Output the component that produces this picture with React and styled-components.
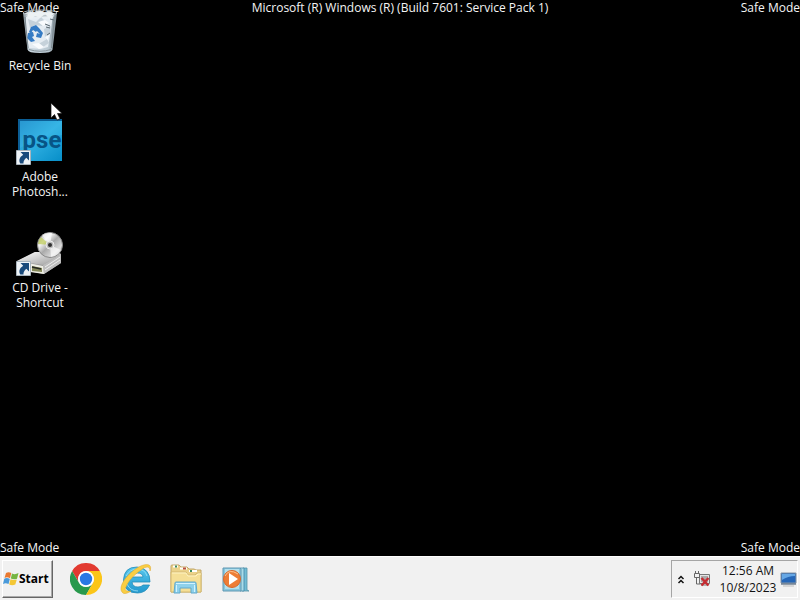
import React from "react";
import styled, { createGlobalStyle } from "styled-components";

const GlobalStyle = createGlobalStyle`
  * { box-sizing: border-box; }
  body { margin: 0; background: #000; }
  button { font: inherit; border: 0; padding: 0; background: none; color: inherit; }
`;

const Screen = styled.div`
  display: flex;
  flex-direction: column;
  min-height: 100vh;
  overflow: hidden;
  background: #000;
  color: #f4f4f4;
  font: 12px/15px "Open Sans", "Noto Sans", sans-serif;
`;

const Desktop = styled.main`
  position: relative;
  flex: 1;
  padding-top: 8px;
`;

const Watermark = styled.div`
  position: absolute;
  left: 0;
  right: 0;
  ${(p) => (p.$bottom ? "bottom: 0;" : "top: 0;")}
  display: grid;
  grid-template-columns: 1fr auto 1fr;
  line-height: 16px;
  white-space: nowrap;
  pointer-events: none;

  span:last-child { text-align: right; }
`;

const Shortcuts = styled.nav`
  position: relative;
  display: flex;
  flex-direction: column;
  width: 80px;
`;

const Shortcut = styled.button`
  display: flex;
  flex-direction: column;
  align-items: center;
  justify-content: flex-start;
  gap: 2px;
  height: 111px;
  text-align: center;

  svg { display: block; flex: none; }
  span { max-width: 72px; }
`;

const Pointer = styled.svg`
  position: absolute;
  left: 50px;
  top: 102px;
`;

const Taskbar = styled.footer`
  display: flex;
  align-items: stretch;
  height: 44px;
  background: #f1f1f1;
  border-top: 1px solid #fff;
  color: #111;
`;

const StartButton = styled.button`
  display: flex;
  align-items: center;
  width: 51px;
  margin: 3px 0 2px 2px;
  padding-bottom: 1px;
  background: #f1f1f1;
  border: 1px solid;
  border-color: #fff #666 #666 #fff;
  box-shadow: inset -1px -1px #aaa;
  color: #000;
  font-size: 12px;
  font-weight: 700;

  svg { flex: none; }
`;

const Pinned = styled.div`
  display: flex;
  align-items: center;
  margin-left: 8px;
`;

const AppButton = styled.button`
  display: flex;
  align-items: center;
  justify-content: center;
  width: 50px;
  height: 40px;
`;

const Tray = styled.section`
  display: flex;
  align-items: center;
  margin: 3px 2px 2px auto;
  border: 1px solid;
  border-color: #a5a5a5 #fff #fff #a5a5a5;
`;

const TrayButton = styled.button`
  display: flex;
  align-items: center;
  justify-content: center;
  width: ${(p) => p.$width}px;
  height: 32px;
`;

const Clock = styled.button`
  display: flex;
  flex-direction: column;
  width: 62px;
  margin-left: 3px;
  line-height: 17px;
  text-align: center;
`;

const ShortcutArrow = () => (
  <g>
    <path d="M.5 31.500h14v14H.5z" fill="#eef3f7" stroke="#a9b4bd" />
    <path d="M4.500 33H13v8.500l-2.700-2.700C8 41 7.300 42.500 7.500 44.500H4.300C2.300 41 3.800 38 7.200 35.700z" fill="#194a7c" />
  </g>
);

const BinIcon = () => (
  <svg width="48" height="48" viewBox="0 0 48 48" aria-hidden="true">
    <defs>
      <linearGradient id="bin" x2="1">
        <stop stopColor="#8d989e" /><stop offset=".2" stopColor="#cbd7df" />
        <stop offset=".75" stopColor="#b9c8d2" /><stop offset="1" stopColor="#727e85" />
      </linearGradient>
    </defs>
    <path d="M7 5l4.500 36.500q.5 3.500 12.500 3.500t12.500-3.500L41 5z" fill="url(#bin)" />
    <path d="M9 5l5-2 4 1 5-2 5 2 6-1 5 3-3 5H12z" fill="#dce3e7" />
    <path d="M10 9l6-2 5 2 5-4 5 3 6-2-2 16-3 17-7 2-12-1-3-16z" fill="#e9f0f5" opacity=".9" />
    <path d="M12 11l8 3 5-5 5 5-4 4-7-1-5 3zM28 21l7-3-1 8-5 3zM26 34l5-3 2 4-6 4-7-2z" fill="#c5d1da" />
    <path d="M22 14l7-2 4 3-6 3zM29 29l4-2-1 5zM16 36l7-1 5 4-5 2z" fill="#f9fbfd" />
    <path d="M29 16l5 2M31 27l3-2M34 11l4 1M30 19l4 1" stroke="#59666e" />
    <ellipse cx="24" cy="5" rx="17" ry="3" fill="none" stroke="#a6b0b5" />
    <path d="M11 7l4 4 4-3 5 2 5-4 4 4 5-4-4-2-6 1-4-2-5 2-5-1z" fill="#edf2f4" />
    <path d="M13 24l2-5 5-2 3 3-3 4-3-2-2 3zM23 20l4 5-2 5-5-1 1-4 3 1-4-4zM12 25l5-1 1 4-2 1 3 4-4 1-4-4z" fill="#357bc4" />
    <path d="M13 41.500q11 3.500 22 0" stroke="#87939a" fill="none" />
    <path d="M9 9l3 31M38.500 9l-3 31" stroke="#7c888f" />
  </svg>
);

const PhotoshopIcon = () => (
  <svg width="48" height="48" viewBox="0 0 48 48" aria-hidden="true">
    <defs>
      <linearGradient id="pse" x2=".9" y2="1">
        <stop stopColor="#1c89c7" /><stop offset=".5" stopColor="#2daee1" /><stop offset="1" stopColor="#0a91ca" />
      </linearGradient>
    </defs>
    <path d="M2 0h44v42H2z" fill="#0b5e95" />
    <path d="M4 2h42v40H4z" fill="url(#pse)" />
    <path d="M4 2h42v14Q24 17 4 29z" fill="#59d1fa" opacity=".2" />
    <text x="26" y="29" textAnchor="middle" fill="#075486" fontFamily="Roboto, sans-serif" fontSize="24" fontWeight="700">pse</text>
    <ShortcutArrow />
  </svg>
);

const DriveIcon = () => (
  <svg width="48" height="48" viewBox="0 0 48 48" aria-hidden="true">
    <defs>
      <linearGradient id="disc" x2="1" y2="1">
        <stop stopColor="#999" /><stop offset=".3" stopColor="#f4f4f4" />
        <stop offset=".5" stopColor="#aaa" /><stop offset=".75" stopColor="#ddd" /><stop offset="1" stopColor="#777" />
      </linearGradient>
      <linearGradient id="drive" x2="1" y2="1"><stop stopColor="#fff" /><stop offset="1" stopColor="#999" /></linearGradient>
    </defs>
    <path d="M1 31l18-9h22l4 2v9L28 44l-27-5z" fill="#999" />
    <path d="M1 31l18-9h22l4 2-18 11z" fill="url(#drive)" />
    <path d="M27 35l18-11v9L28 44z" fill="#bdbdbd" />
    <path d="M12 33l15 3 1 8-14-2z" fill="#eeeee5" />
    <path d="M16 36l10 2v4l-10-1z" fill="#858959" /><path d="M16 37l9 2" stroke="#252820" strokeWidth="1.500" />
    <path d="M29 37l15-10M29 40l15-10" stroke="#eee" />
    <circle cx="34" cy="15" r="12.500" fill="url(#disc)" stroke="#888" />
    <path d="M34 15l-8-10q4-3 10-2zM34 15l11 5q-3 6-10 7z" fill="#fff" opacity=".65" />
    <path d="M34 15l-12-1q0-4 3-7z" fill="#b8c747" opacity=".65" />
    <circle cx="34" cy="15" r="4" fill="#bbb" stroke="#eee" /><circle cx="34" cy="15" r="2" fill="#303030" />
    <ShortcutArrow />
  </svg>
);

const WindowsLogo = () => (
  <svg width="16" height="16" viewBox="0 0 16 16" aria-hidden="true">
    <path d="M3 2q2.500-1.500 5.300 0L7 7.200Q4 5.500 1.500 7z" fill="#e97930" />
    <path d="M9 2.500q3 1.500 6.500-.5L14 7.800q-3 1.200-6.200-.3z" fill="#75b541" />
    <path d="M1.300 7.700q2.500-1.500 5.500.2L5.500 13Q2.500 11.500 0 13z" fill="#4a9ada" />
    <path d="M7.500 8.200q3 1.500 6.300.2l-1.500 5.100Q9 15 6.200 13.500z" fill="#f4c735" />
  </svg>
);

const ChromeIcon = () => (
  <svg width="32" height="32" viewBox="0 0 32 32" aria-hidden="true">
    <path d="M16 8H29.860A16 16 0 0 0 2.140 8L9.070 20A8 8 0 0 1 16 8z" fill="#e23a30" />
    <path d="M9.070 20L2.140 8A16 16 0 0 0 16 32l6.930-12A8 8 0 0 1 9.070 20z" fill="#28994c" />
    <path d="M22.930 20L16 32A16 16 0 0 0 29.860 8H16a8 8 0 0 1 6.930 12z" fill="#fbc518" />
    <circle cx="16" cy="16" r="7.800" fill="#fff" /><circle cx="16" cy="16" r="6.200" fill="#2878e4" />
  </svg>
);

const ExplorerIcon = () => (
  <svg width="34" height="34" viewBox="0 0 34 34" aria-hidden="true">
    <defs><linearGradient id="ie" x2="0" y2="1"><stop stopColor="#55c6ed" /><stop offset="1" stopColor="#2398ce" /></linearGradient></defs>
    <path d="M31 20H13q.5 5 6 5 3.500 0 5-2h6.500Q27 31 18.500 31 5 31 4.500 18 5 5 18 5q13 1 13 15zM13 15h11q-.5-4-5.500-4T13 15z" fill="url(#ie)" stroke="#258db9" strokeWidth=".8" fillRule="evenodd" />
    <path d="M7 14q4-7 11-7 8 0 10 7M8 22q3 7 11 7" fill="none" stroke="#a5e5f7" opacity=".75" />
    <path d="M31 9C34 1 26 1 18 6 7 13-1 25 3 30c2 3 6 1 9-1-5 1-7-1-5-4C9 19 16 12 22 8c5-4 9-4 9 1z" fill="#f9ce43" stroke="#dda52b" strokeWidth=".5" />
  </svg>
);

const FolderIcon = () => (
  <svg width="34" height="32" viewBox="0 0 34 32" aria-hidden="true">
    <path d="M2 6V3q0-1 1-1h7l2 2h6l2 2h5l2 1h5v22H2z" fill="#ebd289" stroke="#c2a768" />
    <path d="M4 3.500h5M11 5.500h7M20 8h8" stroke="#fff" strokeWidth="2" />
    <path d="M6 3.500h2M21 8h2" stroke="#3b8b60" strokeWidth="2" /><path d="M14 5.500h3" stroke="#b75040" strokeWidth="2" />
    <path d="M2 9h15l2 3h7l2-2h4v19H2z" fill="#f5df96" stroke="#d4b970" />
    <path d="M3 10h14l2 3h8l2-2h3" stroke="#fff3c2" fill="none" />
    <path d="M5 30l1-10q0-1 1-1h19q1 0 1 1l1 10h-6v-5H11v5z" fill="#8ed1eb" stroke="#60a8cb" />
    <path d="M7 20.500h19M7.500 22v7M25.500 22v7" stroke="#d2f3ff" />
  </svg>
);

const MediaIcon = () => (
  <svg width="28" height="28" viewBox="0 0 28 28" aria-hidden="true">
    <path d="M21 3h4v22l2 1h-7z" fill="#72bdd5" stroke="#5795aa" strokeWidth=".8" />
    <path d="M18 3h4v23h-4z" fill="#a9dce9" stroke="#4387a6" strokeWidth=".8" />
    <path d="M1 3h17l1 1v22H1z" fill="#86c7df" stroke="#6197b1" />
    <path d="M3 4h14v20H3z" fill="#b3dfec" />
    <circle cx="10" cy="14" r="8.500" fill="#ed7d36" stroke="#d8672a" />
    <path d="M3 11q4-8 13-2" stroke="#ffc28b" fill="none" />
    <path d="M7 8v12l9-6z" fill="#fff" />
  </svg>
);

const Chevrons = () => (
  <svg width="8" height="9" viewBox="0 0 8 9" aria-hidden="true">
    <path d="M1.500 4L4 1.500 6.500 4M1.500 8L4 5.500 6.500 8" fill="none" stroke="#111" strokeWidth="1.500" />
  </svg>
);

const NetworkIcon = () => (
  <svg width="18" height="18" viewBox="0 0 18 18" aria-hidden="true">
    <path d="M6.500 4.500h10v9h-10z" fill="#e4e4e4" stroke="#777" /><path d="M8 6h7v6H8z" fill="#aaa" />
    <path d="M8 15h7" stroke="#777" />
    <path d="M2.500 1v3M5.500 1v3M1.500 3.500h5v4h-5zM3.500 8v6h4" fill="none" stroke="#666" />
    <path d="M8.500 8l7 7.500M15.500 8l-7 7.500" stroke="#c52c32" strokeWidth="2.500" />
  </svg>
);

const DisplayIcon = () => (
  <svg width="17" height="16" viewBox="0 0 17 16" aria-hidden="true">
    <path d="M1 2h15v10H1z" fill="#2566b7" stroke="#8494a5" />
    <path d="M2 3h13v2Q8 5 2 9z" fill="#65a7e5" /><path d="M1 13h15" stroke="#334b64" />
    <path d="M3 15h11" stroke="#bbb" />
  </svg>
);

const shortcuts = [
  ["Recycle Bin", BinIcon],
  ["Adobe Photosh...", PhotoshopIcon],
  ["CD Drive - Shortcut", DriveIcon],
];

const pinned = [
  ["Google Chrome", ChromeIcon],
  ["Internet Explorer", ExplorerIcon],
  ["Windows Explorer", FolderIcon],
  ["Windows Media Player", MediaIcon],
];

export default function App() {
  return (
    <Screen>
      <GlobalStyle />
      <Desktop>
        <Watermark>
          <span>Safe Mode</span>
          <span>Microsoft (R) Windows (R) (Build 7601: Service Pack 1)</span>
          <span>Safe Mode</span>
        </Watermark>
        <Shortcuts aria-label="Desktop">
          {shortcuts.map(([name, Icon]) => (
            <Shortcut key={name}><Icon /><span>{name}</span></Shortcut>
          ))}
        </Shortcuts>
        <Watermark $bottom>
          <span>Safe Mode</span><span /><span>Safe Mode</span>
        </Watermark>
        <Pointer width="14" height="20" viewBox="0 0 14 20" aria-hidden="true">
          <path d="M1 1v15l3.500-3.500L7 18l3-1.200-2.500-5.300H12z" fill="#fff" stroke="#111" strokeWidth=".7" />
        </Pointer>
      </Desktop>
      <Taskbar>
        <StartButton><WindowsLogo />Start</StartButton>
        <Pinned>
          {pinned.map(([name, Icon]) => (
            <AppButton key={name} aria-label={name}><Icon /></AppButton>
          ))}
        </Pinned>
        <Tray aria-label="Notification area">
          <TrayButton $width={18} aria-label="Show hidden icons"><Chevrons /></TrayButton>
          <TrayButton $width={24} aria-label="Network"><NetworkIcon /></TrayButton>
          <Clock><span>12:56 AM</span><span>10/8/2023</span></Clock>
          <TrayButton $width={18} aria-label="Display"><DisplayIcon /></TrayButton>
        </Tray>
      </Taskbar>
    </Screen>
  );
}
